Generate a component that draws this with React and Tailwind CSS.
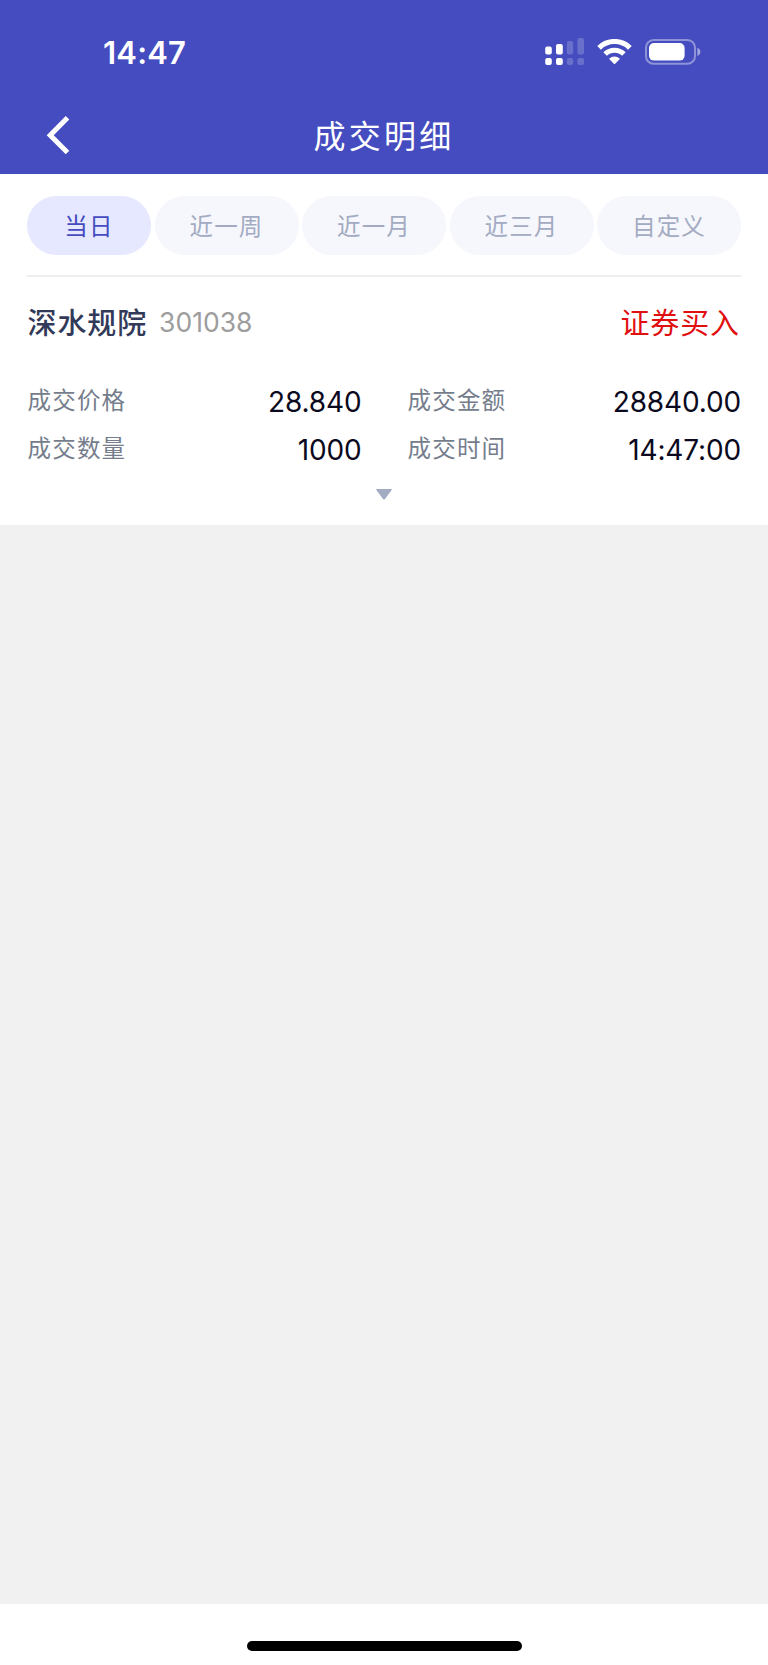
const tabs = [
  { label: "当日", active: true },
  { label: "近一周" },
  { label: "近一月" },
  { label: "近三月" },
  { label: "自定义" },
];

const columns = [
  [
    { label: "成交价格", value: "28.840" },
    { label: "成交数量", value: "1000" },
  ],
  [
    { label: "成交金额", value: "28840.00" },
    { label: "成交时间", value: "14:47:00" },
  ],
];

function CellularIcon() {
  return (
    <svg width="40" height="28" viewBox="0 0 40 28" fill="white">
      <rect x="0.2" y="8.6" width="6.6" height="7.9" rx="2" />
      <rect x="11" y="6" width="6.8" height="10.5" rx="2" />
      <rect x="0.2" y="20" width="6.6" height="7" rx="2" />
      <rect x="11" y="20" width="6.8" height="7" rx="2" />
      <g opacity="0.2">
        <rect x="21.8" y="3" width="6.4" height="13.5" rx="2" />
        <rect x="32.4" y="0" width="6.6" height="16.5" rx="2" />
        <rect x="21.8" y="20" width="6.4" height="7" rx="2" />
        <rect x="32.4" y="20" width="6.6" height="7" rx="2" />
      </g>
    </svg>
  );
}

function WifiIcon() {
  return (
    <svg width="36" height="26" viewBox="0 0 36 26" fill="none" stroke="white" strokeWidth="5.2">
      <path d="M2.1 8.8 A22 22 0 0 1 32.9 8.8" />
      <path d="M8.1 15 A13.4 13.4 0 0 1 26.9 15" strokeWidth="5" />
      <path d="M12 19.8 Q17.5 15.4 23 19.8 L18.2 24.7 Q17.5 25.3 16.8 24.7 Z" fill="white" stroke="none" />
    </svg>
  );
}

function BatteryIcon() {
  return (
    <svg width="56" height="26" viewBox="0 0 56 26">
      <rect x="1" y="1" width="49" height="23.8" rx="7.6" fill="none" stroke="white" strokeOpacity="0.4" strokeWidth="2" />
      <rect x="4" y="4" width="35.6" height="17.6" rx="5" fill="white" />
      <path d="M52.4 8.7 C56.4 10 56.4 15.5 52.4 16.9 Z" fill="white" fillOpacity="0.5" />
    </svg>
  );
}

export default function App() {
  return (
    <div className="flex h-[1665px] w-[768px] flex-col bg-[#f1f1f1] font-['Inter','Noto_Sans_CJK_SC',sans-serif]">
      <header className="h-[174px] shrink-0 bg-[#444cbf] text-white">
        <div className="flex h-[104px] items-center justify-between pl-[103px] pr-[67px]">
          <span className="pt-px text-[31px] font-semibold leading-none tracking-[0.2px]">14:47</span>
          <div className="flex items-center">
            <CellularIcon />
            <span className="ml-[12px] flex"><WifiIcon /></span>
            <span className="ml-[12px] flex"><BatteryIcon /></span>
          </div>
        </div>
        <div className="grid h-[64px] grid-cols-[1fr_auto_1fr] items-center">
          <button className="ml-[46px] w-[24px] pb-[2px]" aria-label="返回">
            <svg width="24" height="38" viewBox="0 0 24 38" fill="none" stroke="white" strokeWidth="5">
              <path d="M21.5 1.8 L4.2 19.2 L21.5 36.5" />
            </svg>
          </button>
          <h1 className="pt-[2px] text-[32px] font-normal leading-none tracking-[3.3px]">成交明细</h1>
        </div>
      </header>

      <main className="h-[351px] shrink-0 bg-white px-[27px] pt-[22px]">
        <nav className="flex justify-between">
          {tabs.map((t) => (
            <button
              key={t.label}
              className={
                t.active
                  ? "h-[58.7px] w-[124px] rounded-full bg-[#e5e8ff] pt-[2px] text-[23.5px] leading-none tracking-[1.2px] text-[#444cbf]"
                  : "h-[58.7px] w-[144px] rounded-full bg-[#f6f7fc] pt-[2px] text-[23.5px] leading-none tracking-[1.2px] text-[#a3abc2]"
              }
            >
              {t.label}
            </button>
          ))}
        </nav>
        <div className="mt-[20.3px] h-[2px] bg-[#eeeef0]" />
        <div className="mt-[29px] flex h-[32px] items-center">
          <span className="pl-[0.5px] pt-[3px] text-[29px] font-medium leading-none tracking-[0.9px] text-[#333a59]">深水规院</span>
          <span className="ml-[12px] text-[26.5px] leading-none text-[#9d9d9d]">301038</span>
          <span className="ml-auto pr-[1px] pt-[3px] text-[29px] leading-none tracking-[0.9px] text-[#e01010]">证券买入</span>
        </div>
        <div className="mt-[38px] grid grid-cols-[334.5px_334px] justify-between">
          {columns.map((rows, i) => (
            <dl key={i} className="flex flex-col">
              {rows.map((r) => (
                <div key={r.label} className="flex h-[48px] items-center justify-between">
                  <dt className="pl-[0.5px] pt-[2px] text-[23.5px] leading-none tracking-[1.2px] text-[#757d8c]">{r.label}</dt>
                  <dd className="pt-[4px] text-[28px] leading-none tracking-[-0.15px] text-[#0b0920]">{r.value}</dd>
                </div>
              ))}
            </dl>
          ))}
        </div>
        <div className="mt-[17px] flex justify-center">
          <svg width="16" height="11" viewBox="0 0 16 11" fill="#a3abc2">
            <path d="M0 0.6 Q0 0 1 0 H15 Q16 0 16 0.6 L9 10 Q8 11 7 10 Z" />
          </svg>
        </div>
      </main>

      <footer className="mt-auto h-[61.5px] shrink-0 bg-white pt-[37.5px]">
        <div className="mx-auto h-[9.5px] w-[275px] rounded-full bg-black" />
      </footer>
    </div>
  );
}
